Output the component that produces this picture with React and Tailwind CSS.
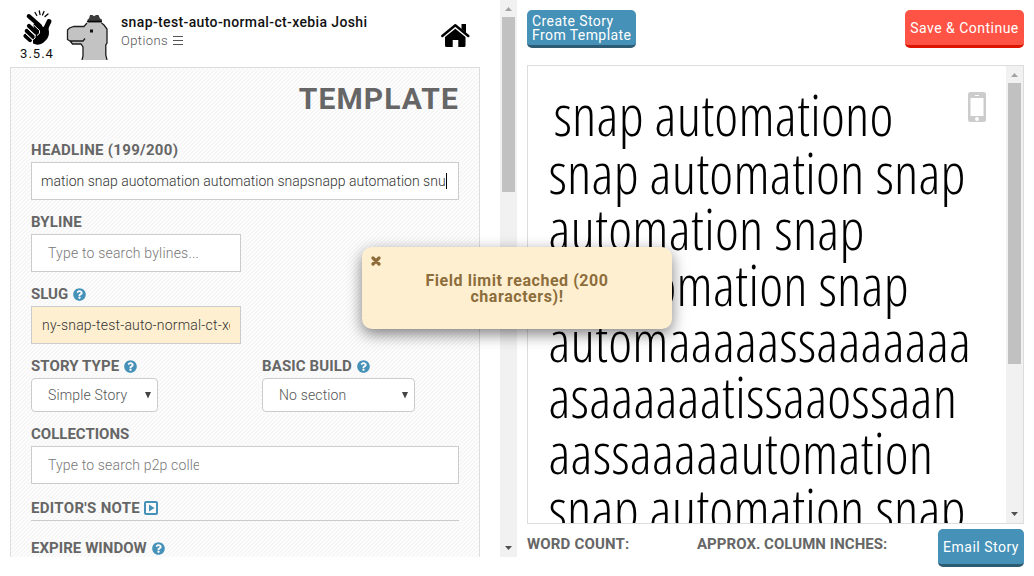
import React from "react";
import { FaQuestionCircle } from "react-icons/fa";

const storyLines = [
  "snap automation snap",
  "automation snap",
  "aaautomation snap",
  "automaaaaassaaaaaaa",
  "asaaaaaatissaaossaan",
  "aassaaaaautomation",
  "snap automation snap",
];

function SnapLogo() {
  return (
    <svg width="31" height="36" viewBox="0 0 31 36" className="block">
      <path d="M11 14L17 12.500L21 17L26 15L27 22Q27.500 28 21 33Q16 36 11 33.500L11 30L14 25Z" fill="#000" />
      <g stroke="#000" strokeLinecap="round" fill="none">
        <path d="M6.800 6.200L18 16" strokeWidth="4.200" />
        <path d="M27 11.500L23 20" strokeWidth="4.800" />
        <path d="M7 16L14 22.500M4.800 21L11.500 27M3.500 26L8 30" strokeWidth="4.200" />
        <path d="M13 2.500L14.800 5.500M17.300 0.800L18 4.500M22 1.500L20.500 5M26 4L23 6.500" strokeWidth="1.300" />
      </g>
      <path d="M9.500 13L17.500 20.500Q18.500 24 15 25.500M5.500 18.500L13 25.500Q14 28 11.500 29.500M4 24L10 29.500" stroke="#fff" strokeWidth="1" fill="none" />
    </svg>
  );
}

function Dino() {
  return (
    <svg width="43" height="46" viewBox="0 0 43 46" className="block">
      <path d="M10 12.500H18L21 9H35.500L38 11L41 15V29L40 31V46H17V34L15 30H6L4 27L1.500 26V16L4 13.500Z" fill="#c3c3c3" />
      <path d="M21 9L18 12.500H8L3.500 14L1.500 16V25.500L4 27H17L19 24.500M4.500 27.500L6.500 30H15L17 33V42L16 46M35.500 9L38 11L41 15V29L39.800 31V41L41 46" fill="none" stroke="#1c1c1c" strokeWidth="1.300" />
      <path d="M22 8.500L21.500 5.500L23 4.500L24 1H26.500L28 2.200L30 1H32.500L34 4.500L36 5.500L35.500 8.500Z" fill="#3c3c3c" />
      <path d="M21 7.500H36" stroke="#080808" strokeWidth="1.600" />
      <rect x="24" y="15.500" width="3" height="3" fill="#111" />
    </svg>
  );
}

function HomeIcon() {
  return (
    <svg width="29" height="24" viewBox="0 0 29 24" className="ml-px mt-[24px] block shrink-0">
      <path d="M20.500 0H25V9L20.500 5Z" />
      <path d="M1.300 12L14.300 1.300L27.300 12" fill="none" stroke="#000" strokeWidth="2.400" strokeLinecap="round" strokeLinejoin="round" />
      <path d="M14.300 4.800L24.500 13V21.500Q24.500 23 23 23H17.300V16H11.700V23H5.500Q4 23 4 21.500V13Z" />
    </svg>
  );
}

function PhoneIcon() {
  return (
    <svg width="18" height="30" viewBox="0 0 18 30" className="absolute left-[440px] top-[26px]">
      <rect width="18" height="30" rx="2.500" fill="#ccc" />
      <rect x="2.500" y="6" width="13" height="18" fill="#fff" />
      <path d="M7 3.500H11" stroke="#fff" />
      <circle cx="9" cy="27" r="1.900" fill="#fff" />
    </svg>
  );
}

function Label({ children, className = "" }) {
  return (
    <div className={`flex h-6 items-center whitespace-nowrap text-[15px] font-bold leading-6 text-[#666] ${className}`}>
      {children}
    </div>
  );
}

function Help() {
  return <FaQuestionCircle className="ml-[5px] size-[13px] shrink-0 text-[#4591b8]" />;
}

function Scrollbar({ className, thumb }) {
  return (
    <div className={`flex w-[17px] shrink-0 flex-col items-center justify-between bg-[#f1f1f1] ${className}`}>
      <div className="flex w-full flex-col items-center">
        <svg width="7" height="17" viewBox="0 0 7 17"><path d="M0 11L3.500 7L7 11Z" fill="#a3a3a3" /></svg>
        <div className={`w-[13px] bg-[#c1c1c1] ${thumb}`} />
      </div>
      <svg width="7" height="17" viewBox="0 0 7 17"><path d="M0 6L3.500 10L7 6Z" fill="#505050" /></svg>
    </div>
  );
}

function Select({ children, className }) {
  return (
    <div className={`flex h-[34px] items-center justify-between rounded-[4px] border border-[#ccc] bg-white pl-4 pr-[6px] text-[14px] font-light text-[#555] ${className}`}>
      <span className="tracking-[0.150px]">{children}</span>
      <svg width="6" height="7" viewBox="0 0 6 7"><path d="M0 0H6L3 6.500Z" fill="#444" /></svg>
    </div>
  );
}

export default function App() {
  return (
    <div className="relative flex h-[576px] w-[1034px] overflow-hidden bg-white font-['Roboto','Liberation_Sans',sans-serif]">
      <div className="flex h-[557px] w-[517px] shrink-0 overflow-hidden">
        <div className="flex w-[500px] shrink-0 flex-col pl-[10px]">
          <header className="flex h-[67px] shrink-0 items-start">
            <div className="flex w-[54px] flex-col items-center pt-[10px]">
              <SnapLogo />
              <span className="text-[13px] leading-[15px] tracking-[1px] text-[#111]">3.5.4</span>
            </div>
            <div className="ml-[2px] pt-[14px]"><Dino /></div>
            <div className="ml-[12px] w-[319px] whitespace-nowrap pt-[12px]">
              <div className="text-[14px] font-medium leading-[20px] tracking-[0.370px] text-[#111]">snap-test-auto-normal-ct-xebia Joshi</div>
              <div className="flex items-center text-[13px] font-light leading-[18px] tracking-[0.400px] text-[#555]">
                Options
                <svg width="10" height="10" viewBox="0 0 10 10" className="ml-[5px] shrink-0"><path d="M0 0.500H10M0 4.500H10M0 8.500H10" stroke="#555" strokeWidth="1" /></svg>
              </div>
            </div>
            <HomeIcon />
          </header>
          <main className="h-[520px] w-[470px] shrink-0 border border-[#ddd] bg-[linear-gradient(135deg,#f6f6f6_25%,#fdfdfd_25%,#fdfdfd_50%,#f6f6f6_50%,#f6f6f6_75%,#fdfdfd_75%)] bg-[length:4px_4px] px-5">
            <h1 className="h-[70px] pt-[15px] text-right text-[30px] font-bold leading-[32px] tracking-[1.100px] text-[#666]">TEMPLATE</h1>
            <Label className="tracking-[0.300px]">HEADLINE (199/200)</Label>
            <div className="flex h-[38px] items-center overflow-hidden border border-[#ccc] bg-white pl-[9px] text-[14px] font-light whitespace-nowrap text-[#333]">
              <span className="tracking-[0.020px]">mation snap auotomation automation snapsnapp automation snu</span>
              <span className="h-4 w-px bg-black" />
            </div>
            <Label className="mt-[10px] tracking-[0.150px]">BYLINE</Label>
            <div className="flex h-[38px] w-[210px] items-center border border-[#ccc] bg-white pl-4 text-[14px] font-light text-[#777]">
              <span className="tracking-[0.200px]">Type to search bylines...</span>
            </div>
            <Label className="mt-[10px]">SLUG<Help /></Label>
            <div className="flex h-[38px] w-[210px] items-center border border-[#ccc] bg-[#ffefd1] pl-[10px] text-[14px] font-light text-[#333]">
              <span className="w-[188px] overflow-hidden whitespace-nowrap tracking-[0.200px]">ny-snap-test-auto-normal-ct-xebia</span>
            </div>
            <div className="mt-[10px] flex">
              <div className="w-[231px]">
                <Label className="tracking-[0.080px]">STORY TYPE<Help /></Label>
                <Select className="w-[127px]">Simple Story</Select>
              </div>
              <div>
                <Label className="tracking-[0.120px]">BASIC BUILD<Help /></Label>
                <Select className="w-[153px]">No section</Select>
              </div>
            </div>
            <Label className="mt-[10px]">COLLECTIONS</Label>
            <div className="flex h-[38px] items-center border border-[#ccc] bg-white pl-4 text-[14px] font-light text-[#777]">
              <span className="w-[151px] overflow-hidden whitespace-nowrap tracking-[0.160px]">Type to search p2p collections</span>
            </div>
            <div className="mt-[12px] h-[25px] border-b border-[#ccc]">
              <Label className="tracking-[0.320px]">
                EDITOR'S NOTE
                <svg width="14" height="14" viewBox="0 0 14 14" className="ml-[4px] shrink-0">
                  <rect x="1" y="1" width="12" height="12" rx="1" fill="none" stroke="#4591b8" strokeWidth="2" />
                  <path d="M5 3.500L10.500 7L5 10.500Z" fill="#4591b8" />
                </svg>
              </Label>
            </div>
            <Label className="mt-[15px] tracking-[0.050px]">EXPIRE WINDOW<Help /></Label>
          </main>
        </div>
        <Scrollbar className="h-[557px]" thumb="h-[175px]" />
      </div>

      <section className="flex w-[507px] flex-col pl-[10px]">
        <div className="flex h-[65px] items-start justify-between pt-[10px]">
          <button className="h-[38px] w-[109px] rounded-[5px] border-b-[3px] border-[#2c5b73] bg-[#4591b8] pl-[5px] text-left text-[14px] leading-[14px] tracking-[0.420px] whitespace-nowrap text-white">Create Story<br />From Template</button>
          <button className="h-[38px] w-[119px] rounded-[5px] border-b-[3px] border-[#dc1400] bg-[#ff5445] text-[14px] leading-[14px] tracking-[0.480px] whitespace-nowrap text-white">Save &amp; Continue</button>
        </div>
        <div className="flex h-[459px] shrink-0 overflow-hidden border border-[#ddd]">
          <article className="relative w-[478px] shrink-0 overflow-hidden pl-[20.500px] pt-[20px] font-['Open_Sans',sans-serif] text-[57px] font-light leading-[56px] tracking-[0.180px] whitespace-nowrap text-black [font-stretch:75%]">
            <div className="h-[58px] pl-[5px]">snap automationo</div>
            {storyLines.map((line, i) => (
              <div key={i}>{line}</div>
            ))}
            <PhoneIcon />
          </article>
          <Scrollbar className="h-[457px]" thumb="h-[281px]" />
        </div>
        <footer className="flex h-[52px] items-start">
          <Label className="mt-[8px] w-[170px] tracking-[0.180px]">WORD COUNT:</Label>
          <Label className="mt-[8px] w-[241px] tracking-[0.040px]">APPROX. COLUMN INCHES:</Label>
          <button className="mt-[5px] h-[38px] w-[86px] rounded-[5px] border-b-[3px] border-[#2c5b73] bg-[#4591b8] text-[14px] leading-[14px] tracking-[0.500px] whitespace-nowrap text-white">Email Story</button>
        </footer>
      </section>

      <div className="absolute left-[362px] top-[247px] h-[82px] w-[310px] rounded-[10px] bg-[#ffefd1] text-[#8c6d3b] shadow-[0_5px_15px_rgba(0,0,0,0.500)]">
        <svg width="10" height="10" viewBox="0 0 10 10" className="absolute left-[9px] top-[9px]">
          <path d="M2 2L8 8M8 2L2 8" stroke="currentColor" strokeWidth="3.200" strokeLinecap="round" />
        </svg>
        <p className="pt-[26px] text-center text-[16px] font-bold leading-[16px] tracking-[0.550px]">Field limit reached (200<br />characters)!</p>
      </div>
    </div>
  );
}
